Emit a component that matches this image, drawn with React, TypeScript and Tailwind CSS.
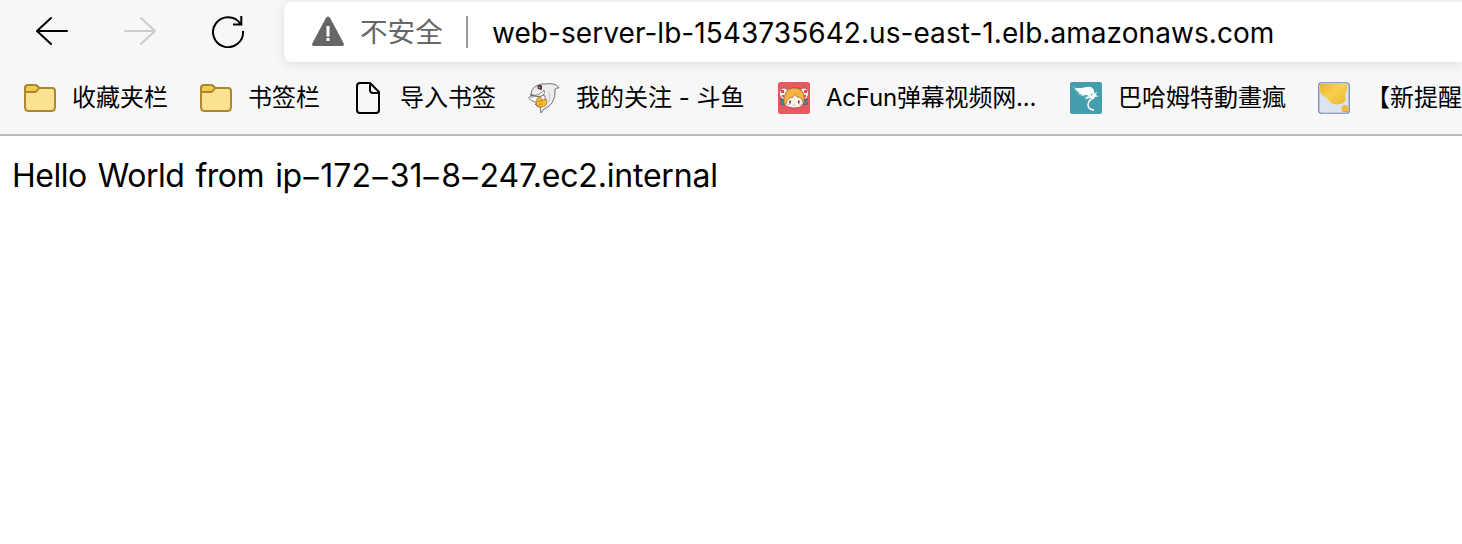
import type { ReactNode } from "react";

function BackArrow() {
  return (
    <svg className="h-8 w-8" viewBox="0 0 32 32" fill="none" stroke="currentColor" strokeWidth="2" strokeLinecap="round" strokeLinejoin="round">
      <path d="M31 16H1M15 3 1 16l14 13" />
    </svg>
  );
}

function ReloadIcon() {
  return (
    <svg className="mt-px h-8 w-8" viewBox="0 0 32 32" fill="none" stroke="#000" strokeWidth="2">
      <path d="M31 15A15 15 0 1 1 28.500 7.800M29.3 0V8.500H21" />
    </svg>
  );
}

function WarningIcon() {
  return (
    <svg className="h-8 w-8" viewBox="0 0 32 32">
      <path d="M13.6 2.4Q16-1.2 18.4 2.4L31.5 27Q32.8 30 29.5 30H2.5Q-.8 30 .5 27Z" fill="#666" />
      <path d="M14.5 10h3v10.5h-3zM14.5 22h3v3h-3z" fill="#fff" />
    </svg>
  );
}

function FolderIcon() {
  return (
    <svg className="h-8 w-8" viewBox="0 0 32 32" stroke="#ad872d" strokeWidth="2" strokeLinejoin="round">
      <path d="M1 6.5Q1 3 4.5 3H11q1.5 0 2.5 1.3L15.2 6H28q3 0 3 3v16q0 4-4 4H5q-4 0-4-4Z" fill="#fbe192" />
      <path d="M1 6.5Q1 3 4.5 3H11q1.5 0 2.5 1.3L15.2 6l-2.4 3q-1 1-2.5 1H1Z" fill="#f1ca51" />
    </svg>
  );
}

function PageIcon() {
  return (
    <svg className="h-8 w-8" viewBox="0 0 32 32" fill="none" stroke="#000" strokeWidth="2" strokeLinejoin="round">
      <path d="M8 1h10l9 9v18q0 3-3 3H8q-3 0-3-3V4q0-3 3-3ZM18 1v7q0 3 3 3h6" />
    </svg>
  );
}

function SharkIcon() {
  return (
    <svg className="h-8 w-8" viewBox="0 0 32 32" strokeLinejoin="round" strokeLinecap="round">
      <path d="M3 13Q3 6 9 3.500q5-2.500 9-1.500 3-1 7 0 4 0 6 4-2-.5-4 1 1 8-3 14-4 5-8 6l-3 4-1-6q-3 0-5-3 8 2 10-4 1-3-1-5-6 3-13 0Z" fill="#ececef" stroke="#686267" strokeWidth=".9" />
      <path d="M3 13q8 2 13-5 1 3-.5 5-5 3-12 0Z" fill="#fff" stroke="#5b4d51" strokeWidth=".7" />
      <path d="M8.500 18q1-3 4-3l1 3 5-.5q1 6-3 7-5 2-7-2Z" fill="#f6bd32" stroke="#a37a25" strokeWidth=".8" />
      <path d="M10 19q2 2 4 0M11 23q1-2 3-1" fill="none" stroke="#bd7c17" strokeWidth=".8" />
      <path d="M5 15Q-1 14 1 16.500t7 4" fill="none" stroke="#645b5f" strokeWidth=".8" />
      <path d="M9.500 4q2-1.500 4.500-.5v4q-3 .5-4.500-1Z" fill="#402b32" />
      <circle cx="11.500" cy="5.500" r="1" fill="#d98191" />
      <path d="M21 10q2 6-1 11" fill="none" stroke="#c0bdc3" strokeWidth=".8" />
    </svg>
  );
}

function AcFunIcon() {
  return (
    <svg className="h-8 w-8" viewBox="0 0 32 32">
      <rect width="32" height="32" rx="2.500" fill="#ec5860" />
      <g stroke="#7e313a" strokeWidth=".6">
        <ellipse cx="6" cy="11.500" rx="4.500" ry="5.500" fill="#fff0ef" />
        <ellipse cx="26" cy="11.500" rx="4.500" ry="5.500" fill="#fff0ef" />
      </g>
      <path d="M3 8h3v3H3zM4 13h2v2H4zM26 8h3v3h-3zM26 13h2v2h-2z" fill="#e94756" />
      <path d="m2 17 5 2v4l-5-1 2-2zM30 17l-5 2v4l5-1-2-2z" fill="#2697bd" stroke="#454453" strokeWidth=".5" />
      <path d="M7 15q1-8 9-9t10 9l-1 8q-3 3-9 3-7 0-10-4Z" fill="#fff4ea" stroke="#704342" strokeWidth=".7" />
      <path d="M6 22Q5 7 15 6q10 0 11 8v8l-3-6-4-1-2-3-3 4-1-1-4 3-1 4Z" fill="#f5b344" stroke="#9b6334" strokeWidth=".7" />
      <path d="M11.200 18.500h1.500v3h-1.500zM20 18.500h1.500v3H20z" fill="#64343a" />
      <path d="M9.500 22h2v1h-2zM21.500 22h2v1h-2z" fill="#efa195" />
      <path d="M15.500 23q.8.6 1.600 0" fill="none" stroke="#9d4b48" strokeWidth=".6" />
    </svg>
  );
}

function DragonIcon() {
  return (
    <svg className="h-8 w-8" viewBox="0 0 32 32">
      <rect width="32" height="32" rx="2" fill="#459eae" />
      <path d="M3 5.500q7 1 11 0 7-2 9 1 2 3 1.500 7.500-2-2-4-2l1 3-5-2-6 1 2-1.500-5-.2 3-1.300-4-1 2-.5-4-2 2-.2Z" fill="#fff" />
      <path d="m13 15.500 7-1.500 3-1 4-3-1 3 2.500 1.500-3 .3-2.500 1.700-3-.5-5 1.500 2-2Z" fill="#fff" />
      <path d="M24 16q-6 2-6 7 0 4.500 6 5" fill="none" stroke="#fff" strokeWidth="1.600" />
    </svg>
  );
}

function HoneyIcon() {
  return (
    <svg className="h-8 w-8" viewBox="0 0 32 32">
      <defs>
        <linearGradient id="honey" x1="0" y1="0" x2="1" y2="1">
          <stop stopColor="#edb42d" />
          <stop offset=".45" stopColor="#f8d04d" />
          <stop offset="1" stopColor="#efb437" />
        </linearGradient>
      </defs>
      <rect x=".75" y=".75" width="30.500" height="30.500" rx="2.500" fill="#dce4ef" stroke="#6e83ae" strokeWidth="1.200" />
      <path d="M2 2h27q1 6-2 10 1 3 .5 6-1.500 4-8.500 4.500-6 0-8-4-1-2.500-4-3.500-5-2-5-8Z" fill="url(#honey)" />
      <circle cx="27" cy="26.500" r="3.500" fill="#eebb3a" />
      <path d="M25 29h5v1h-5z" fill="#dda63d" />
    </svg>
  );
}

function Bookmark({ icon, children, className, label = "" }: { icon: ReactNode; children: ReactNode; className: string; label?: string }) {
  return (
    <div className={`flex h-8 shrink-0 items-center gap-4 ${className}`}>
      <span className="block h-8 w-8 shrink-0">{icon}</span>
      <span className={`whitespace-nowrap leading-8 ${label}`}>{children}</span>
    </div>
  );
}

function Dash() {
  return <span className="-ml-0.5 mr-0.5 inline-block w-[18.7px] origin-left translate-y-px scale-x-150">-</span>;
}

export default function App() {
  return (
    <div className="h-[544px] w-full overflow-hidden bg-white font-['Inter','Noto_Sans_CJK_SC',sans-serif] text-black">
      <header className="h-[136px] overflow-hidden border-b-2 border-[#bcbcbc] bg-[#f7f7f7]">
        <div className="flex h-[70px] items-start pt-0.5">
          <nav className="flex w-[284px] shrink-0 items-start gap-14 pt-[13px] pl-9">
            <BackArrow />
            <span className="rotate-180 text-[#ccc]"><BackArrow /></span>
            <ReloadIcon />
          </nav>
          <div className="flex h-[60px] min-w-0 flex-1 items-center rounded-l-lg bg-white pl-7 shadow-[0_2px_12px_rgba(0,0,0,0.1)]">
            <WarningIcon />
            <span className="ml-4 w-[83px] shrink-0 whitespace-nowrap text-[27.6px] leading-8 text-[#666]">不安全</span>
            <span className="ml-[23px] h-8 w-0.5 shrink-0 bg-[#999]" />
            <span className="ml-6 whitespace-nowrap pt-0.5 text-[28px] leading-8 tracking-[0.06px]">web-server-lb-1543735642.us-east-1.elb.amazonaws.com</span>
          </div>
        </div>
        <div className="flex h-16 items-start pt-3 pl-6 text-2xl">
          <Bookmark icon={<FolderIcon />} className="w-44">收藏夹栏</Bookmark>
          <Bookmark icon={<FolderIcon />} className="w-[152px]">书签栏</Bookmark>
          <Bookmark icon={<PageIcon />} className="w-44">导入书签</Bookmark>
          <Bookmark icon={<SharkIcon />} className="w-[250px]">我的关注 - 斗鱼</Bookmark>
          <Bookmark icon={<AcFunIcon />} className="w-[292px]" label="tracking-[-0.2px]">AcFun弹幕视频网...</Bookmark>
          <Bookmark icon={<DragonIcon />} className="w-[248px]" label="font-['Inter','Noto_Sans_CJK_TC',sans-serif]">巴哈姆特動畫瘋</Bookmark>
          <Bookmark icon={<HoneyIcon />} className="w-44">【新提醒</Bookmark>
        </div>
      </header>
      <main className="px-3 pt-5">
        <p className="whitespace-nowrap text-[32px] leading-10">
          <span className="tracking-[-0.5px] [word-spacing:2.7px]">Hello World from ip</span>
          <Dash />172<Dash />31<Dash />8<Dash />
          <span className="tracking-[-0.2px]">247.ec2.internal</span>
        </p>
      </main>
    </div>
  );
}
